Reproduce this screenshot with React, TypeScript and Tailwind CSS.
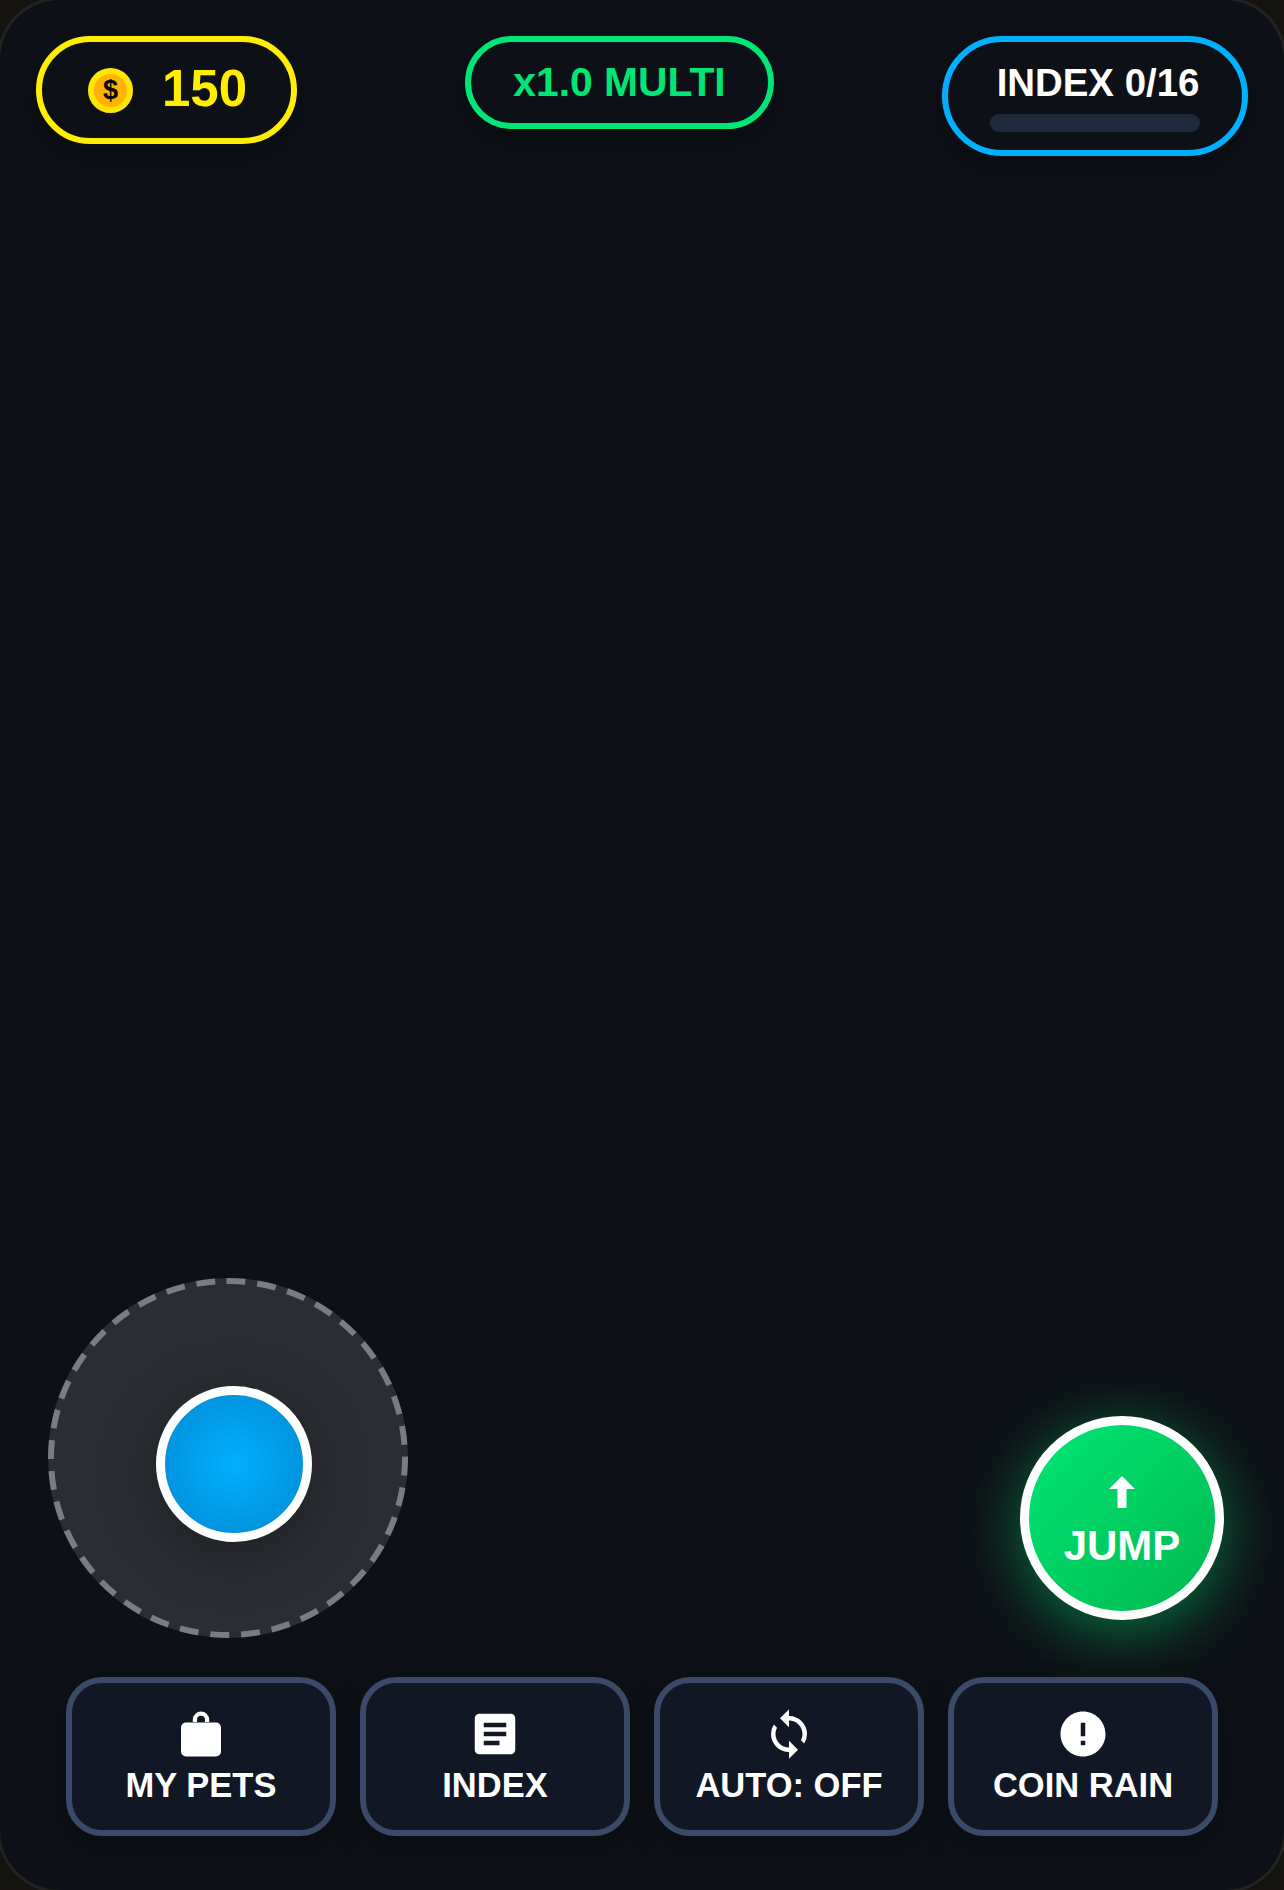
import { MdArticle, MdError, MdSync } from "react-icons/md";

const font = "font-['Liberation_Sans',Arial,sans-serif]";

function BagIcon({ size }: { size: number }) {
  return (
    <svg width={size} height={size} viewBox="0 0 54 54" fill="currentColor" fillRule="evenodd">
      <path d="M18.8 16V12.7a8.2 8.2 0 0 1 16.4 0V16H23ZM23 16H31V12.7a4 4 0 0 0-8 0ZM12 15.5H42a5 5 0 0 1 5 5V44.500a5 5 0 0 1-5 5H12a5 5 0 0 1-5-5V20.500a5 5 0 0 1 5-5Z" />
    </svg>
  );
}

const actions = [
  { label: "MY PETS", icon: BagIcon },
  { label: "INDEX", icon: MdArticle },
  { label: "AUTO: OFF", icon: MdSync },
  { label: "COIN RAIN", icon: MdError },
];

function CoinPill() {
  return (
    <div className="flex h-[108px] w-[261px] items-center gap-[29px] rounded-full border-[6px] border-[#ffee00] pl-[46px] shadow-[0_12px_30px_rgba(0,0,0,0.3)]">
      <div className="flex h-[45px] w-[45px] items-center justify-center rounded-full border-[6px] border-[#ffe600] bg-[#ffb300] text-[27px] font-bold text-black">
        $
      </div>
      <span className="-mt-[4px] text-[51px] leading-none font-bold text-[#ffee00]">150</span>
    </div>
  );
}

function JumpButton() {
  return (
    <button className="mt-[138px] flex h-[204px] w-[204px] flex-col items-center justify-center rounded-full border-[9px] border-white bg-[linear-gradient(135deg,#00e676,#00b84f)] pt-[10px] text-[42px] leading-[48px] font-bold text-white shadow-[0_12px_60px_rgba(0,230,118,0.45)]">
      <svg width="26" height="32" viewBox="0 0 26 32" className="mb-[14px]" fill="currentColor">
        <path d="M13 0 26 13H17.5V32H8.5V13H0Z" />
      </svg>
      JUMP
    </button>
  );
}

export default function App() {
  return (
    <div className={`${font} h-[1890px] w-[1284px] overflow-hidden bg-[#14130f]`}>
      <div className="flex h-full flex-col rounded-[60px] bg-[#0d1117] shadow-[0_0_0_3px_#222222]">
        {/* Top HUD */}
        <header className="flex items-start justify-between px-[36px] pt-[36px]">
          <CoinPill />
          <div className="rounded-full border-[6px] border-[#00e676] px-[42px] pt-[16px] pb-[17px] text-[40.8px] leading-[48px] font-bold text-[#00e676] shadow-[0_12px_30px_rgba(0,0,0,0.3)]">
            x1.0 MULTI
          </div>
          <div className="w-[306px] rounded-full border-[6px] border-[#00b0ff] px-[42px] pt-[17px] pb-[18px] shadow-[0_12px_30px_rgba(0,0,0,0.3)]">
            <div className="pl-[6px] text-center text-[38.4px] leading-[48px] font-bold whitespace-nowrap text-white">INDEX 0/16</div>
            <div className="mt-[7px] h-[18px] rounded-full bg-[#1e293b]" />
          </div>
        </header>

        <div className="flex-1" />

        {/* Joystick and jump */}
        <section className="flex items-start justify-between pr-[60px] pl-[48px]">
          <div className="relative flex h-[360px] w-[360px] items-center justify-center rounded-full bg-white/[0.12]">
            <svg width="360" height="360" viewBox="0 0 360 360" className="absolute inset-0" fill="none">
              <circle cx="180" cy="180" r="177" stroke="rgba(255,255,255,0.38)" strokeWidth="6" strokeDasharray="18.9 12" transform="rotate(-90.5 180 180)" />
            </svg>
            <div className="h-[156px] w-[156px] translate-x-[6px] translate-y-[6px] rounded-full border-[9px] border-white bg-[radial-gradient(circle,#00b0ff,#0288d1)] shadow-[0_12px_60px_rgba(0,0,0,0.3)]" />
          </div>
          <JumpButton />
        </section>

        {/* Action buttons */}
        <nav className="mt-[39px] mb-[54px] flex justify-center gap-[24px]">
          {actions.map((action) => {
            const Icon = action.icon;
            return (
              <button
                key={action.label}
                className="flex h-[159px] w-[270px] flex-col items-center justify-center gap-[5px] rounded-[36px] border-[6px] border-[#3a4a68] bg-[#111724] pb-[3px] text-[34.5px] leading-[38px] font-bold text-white shadow-[0_12px_30px_rgba(0,0,0,0.3)]"
              >
                <Icon size={54} />
                {action.label}
              </button>
            );
          })}
        </nav>
      </div>
    </div>
  );
}
